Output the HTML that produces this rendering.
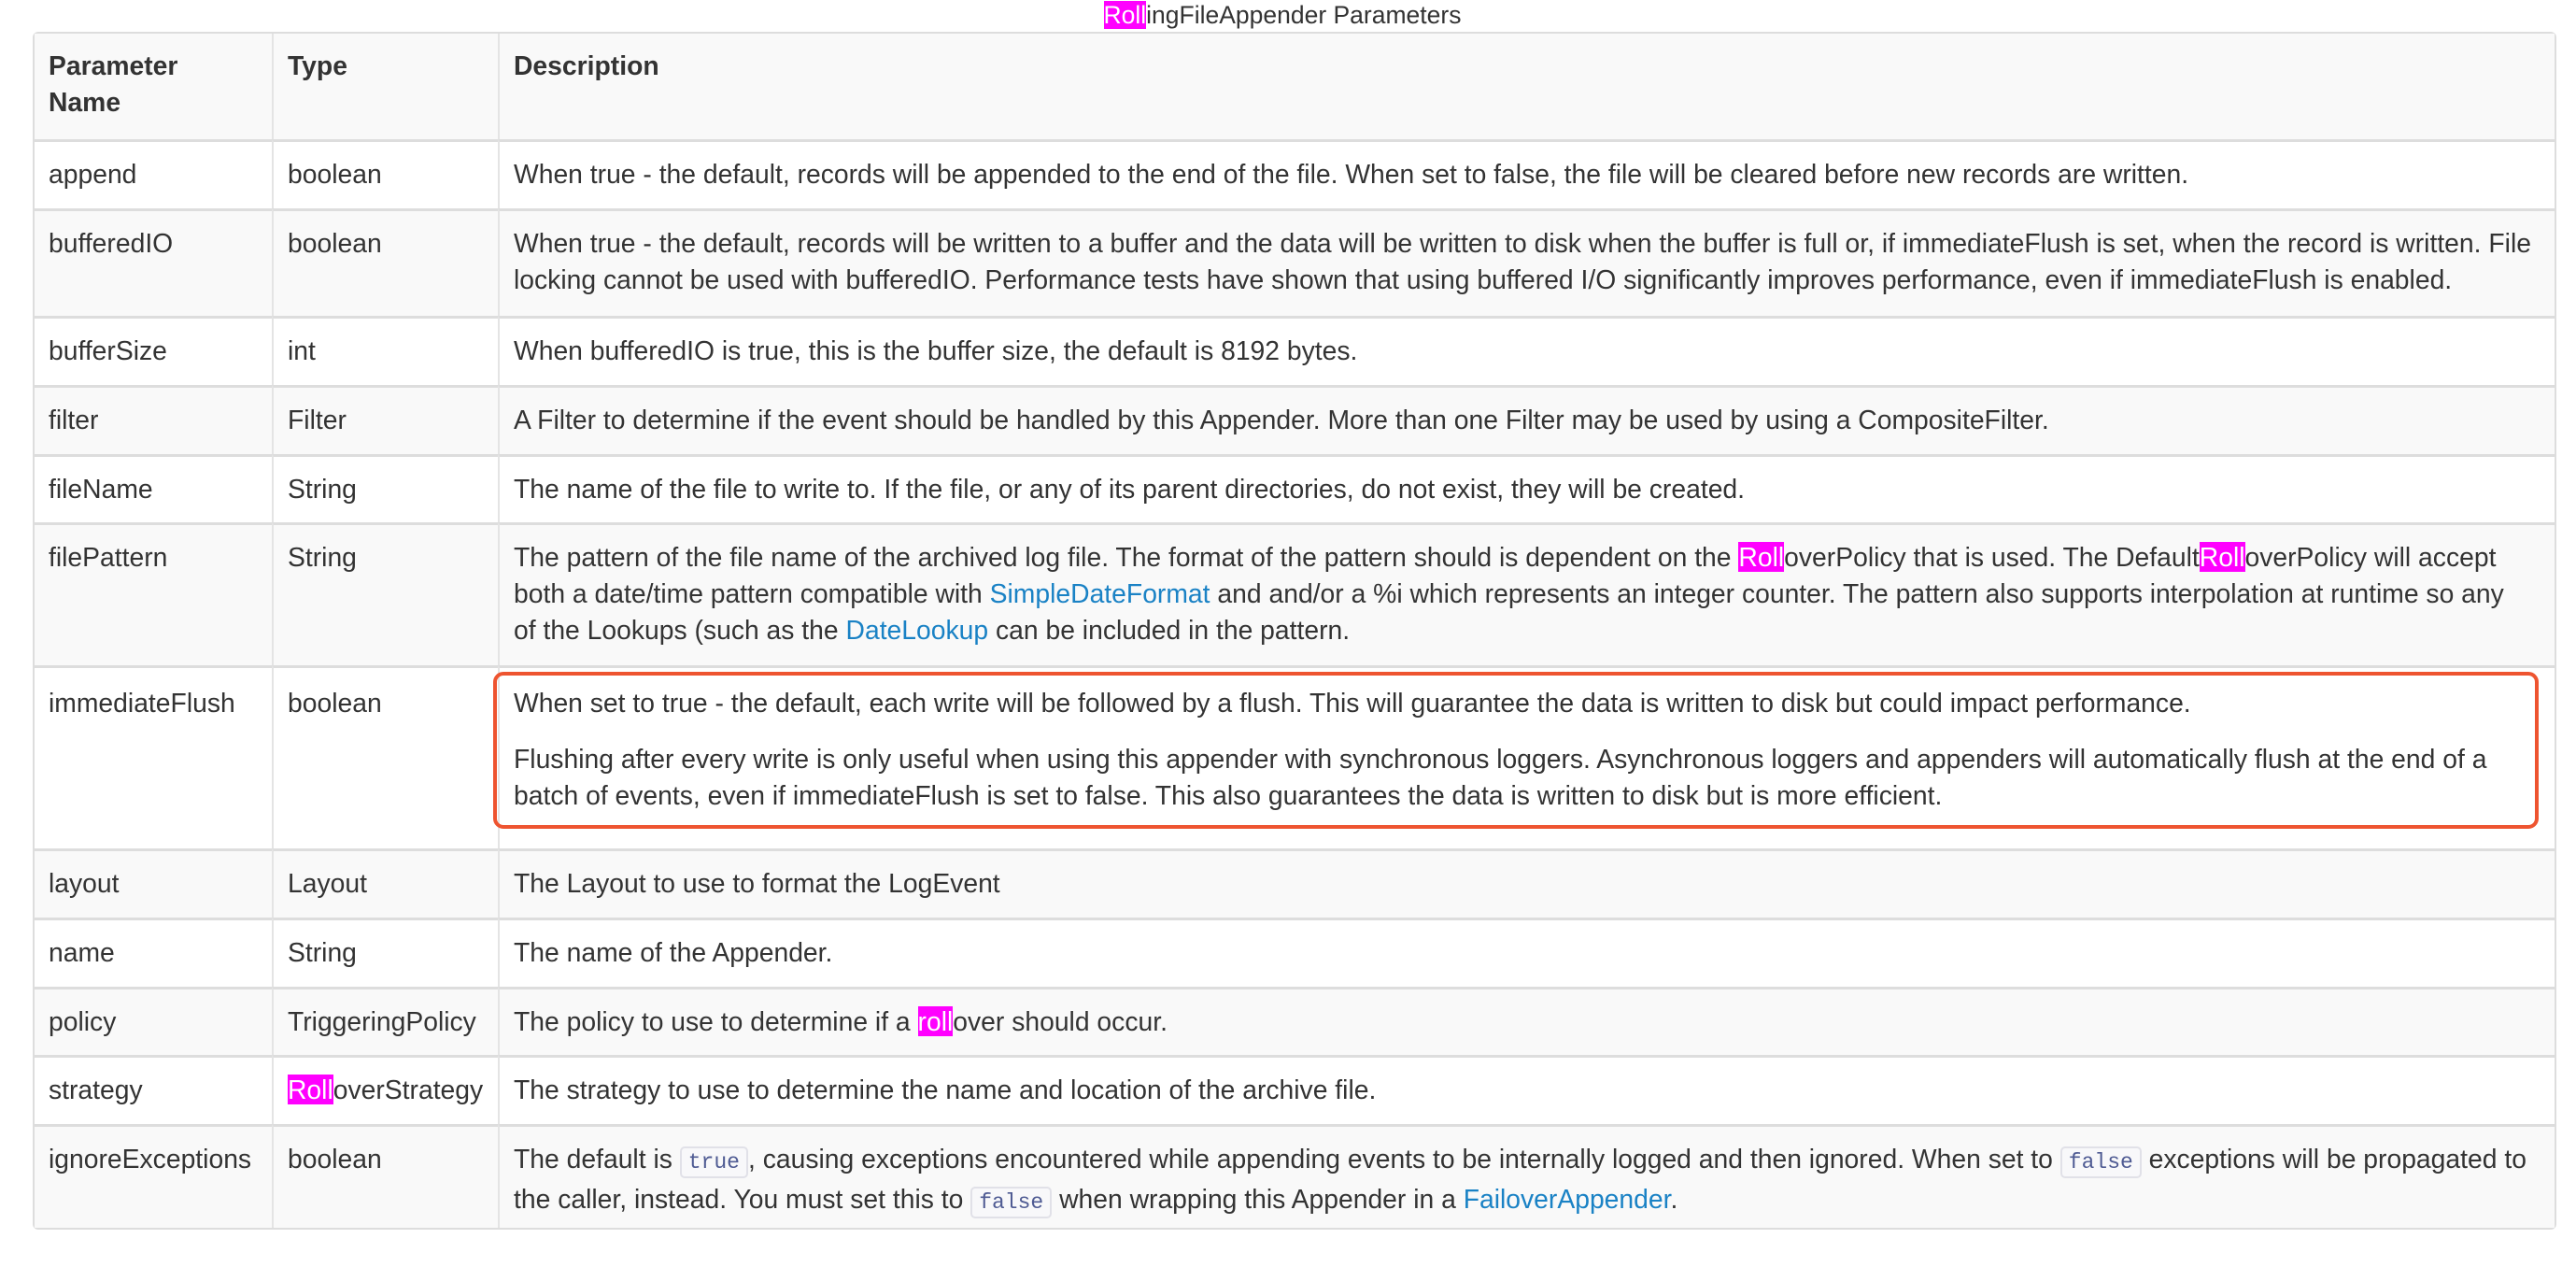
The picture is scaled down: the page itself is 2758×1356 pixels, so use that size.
<!DOCTYPE html>
<html><head><meta charset="utf-8"><style>
html,body{margin:0;padding:0;background:#fff;}
body{width:2758px;height:1356px;position:relative;overflow:hidden;font-family:"Liberation Sans",Arial,sans-serif;color:#333;font-size:28.3px;}
.title{position:absolute;top:0;left:-6px;width:2758px;text-align:center;font-size:26.5px;line-height:32px;}
.hl{background:#ff00ff;color:#fff;}
table{position:absolute;left:35px;top:34px;width:2702px;border-collapse:separate;border-spacing:0;table-layout:fixed;border:2px solid #ddd;border-radius:6px;}
td,th{vertical-align:top;text-align:left;padding:15px 15px 0 15px;line-height:39px;border-left:2px solid #e4e4e4;border-top:3px solid #ddd;white-space:nowrap;box-sizing:border-box;}
th{font-weight:bold;border-top:none;}
td:first-child,th:first-child{border-left:none;}
tr:nth-child(odd){background:#f9f9f9;}
a{color:#1a82c5;text-decoration:none;}
code{font-family:"Liberation Mono",monospace;font-size:23px;color:#4f5b93;background:#f8f8fa;border:2px solid #e1e1e8;border-radius:5px;padding:2px 7px;}
.box{position:absolute;left:528px;top:719px;width:2190px;height:168px;border:4px solid #ee5430;border-radius:11px;box-sizing:border-box;}
p{margin:0;}
</style></head><body>
<div class="title"><span class="hl">Roll</span>ingFileAppender Parameters</div>
<table>
<colgroup><col style="width:254px"><col style="width:242px"><col></colgroup>
<tr style="height:113px"><th>Parameter<br>Name</th><th>Type</th><th>Description</th></tr>
<tr style="height:74px"><td>append</td><td>boolean</td><td>When true - the default, records will be appended to the end of the file. When set to false, the file will be cleared before new records are written.</td></tr>
<tr style="height:115px"><td>bufferedIO</td><td>boolean</td><td>When true - the default, records will be written to a buffer and the data will be written to disk when the buffer is full or, if immediateFlush is set, when the record is written. File<br>locking cannot be used with bufferedIO. Performance tests have shown that using buffered I/O significantly improves performance, even if immediateFlush is enabled.</td></tr>
<tr style="height:74px"><td>bufferSize</td><td>int</td><td>When bufferedIO is true, this is the buffer size, the default is 8192 bytes.</td></tr>
<tr style="height:74px"><td>filter</td><td>Filter</td><td>A Filter to determine if the event should be handled by this Appender. More than one Filter may be used by using a CompositeFilter.</td></tr>
<tr style="height:73px"><td>fileName</td><td>String</td><td>The name of the file to write to. If the file, or any of its parent directories, do not exist, they will be created.</td></tr>
<tr style="height:153px"><td>filePattern</td><td>String</td><td>The pattern of the file name of the archived log file. The format of the pattern should is dependent on the <span class="hl">Roll</span>overPolicy that is used. The Default<span class="hl">Roll</span>overPolicy will accept<br>both a date/time pattern compatible with <a>SimpleDateFormat</a> and and/or a %i which represents an integer counter. The pattern also supports interpolation at runtime so any<br>of the Lookups (such as the <a>DateLookup</a> can be included in the pattern.</td></tr>
<tr style="height:196px"><td style="padding-top:18px">immediateFlush</td><td style="padding-top:18px">boolean</td><td style="padding-top:18px"><p style="margin-bottom:21px">When set to true - the default, each write will be followed by a flush. This will guarantee the data is written to disk but could impact performance.</p><p>Flushing after every write is only useful when using this appender with synchronous loggers. Asynchronous loggers and appenders will automatically flush at the end of a<br>batch of events, even if immediateFlush is set to false. This also guarantees the data is written to disk but is more efficient.</p></td></tr>
<tr style="height:74px"><td>layout</td><td>Layout</td><td>The Layout to use to format the LogEvent</td></tr>
<tr style="height:74px"><td>name</td><td>String</td><td>The name of the Appender.</td></tr>
<tr style="height:73px"><td>policy</td><td>TriggeringPolicy</td><td>The policy to use to determine if a <span class="hl">roll</span>over should occur.</td></tr>
<tr style="height:74px"><td>strategy</td><td><span class="hl">Roll</span>overStrategy</td><td>The strategy to use to determine the name and location of the archive file.</td></tr>
<tr style="height:111px"><td>ignoreExceptions</td><td>boolean</td><td>The default is <code>true</code>, causing exceptions encountered while appending events to be internally logged and then ignored. When set to <code>false</code> exceptions will be propagated to<br>the caller, instead. You must set this to <code>false</code> when wrapping this Appender in a <a>FailoverAppender</a>.</td></tr>
</table>
<div class="box"></div>
</body></html>
